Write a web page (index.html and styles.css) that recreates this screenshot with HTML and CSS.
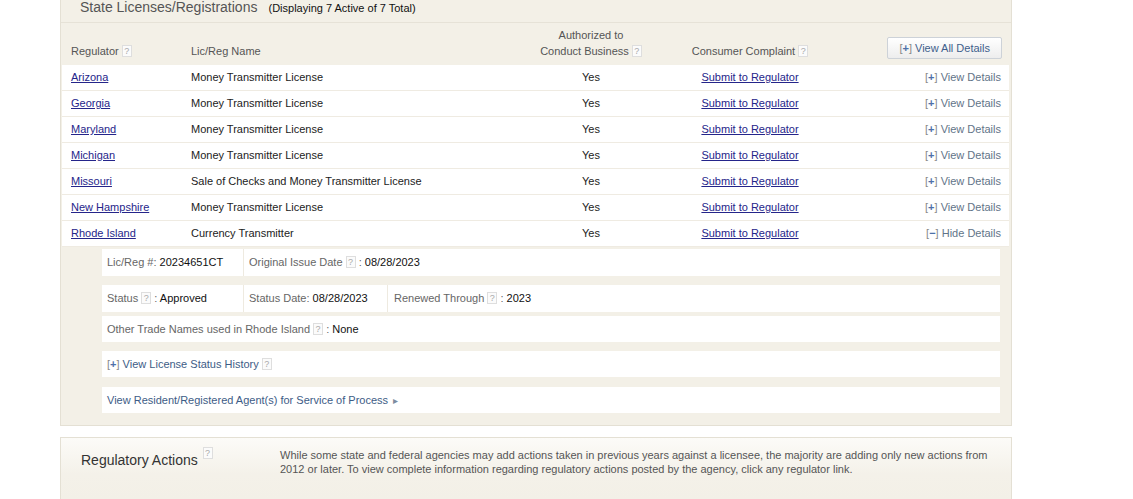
FILE: index.html
```html
<!DOCTYPE html>
<html>
<head>
<meta charset="utf-8">
<link rel="stylesheet" href="styles.css">
</head>
<body>
<div class="panel licenses">
  <div class="panel-title">
    <span class="title">State Licenses/Registrations</span>
    <span class="count">(Displaying 7 Active of 7 Total)</span>
  </div>
  <div class="grid thead">
    <div class="c1">Regulator <span class="help">?</span></div>
    <div class="c2">Lic/Reg Name</div>
    <div class="c3">Authorized to<br>Conduct Business <span class="help">?</span></div>
    <div class="c4">Consumer Complaint <span class="help">?</span></div>
    <div class="c5"><span class="btn"><span class="tog">[<b>+</b>]</span> View All Details</span></div>
  </div>
  <div class="grid row">
    <div class="c1"><a class="link">Arizona</a></div>
    <div class="c2">Money Transmitter License</div>
    <div class="c3">Yes</div>
    <div class="c4"><a class="link">Submit to Regulator</a></div>
    <div class="c5 act"><span class="tog">[<b>+</b>]</span> View Details</div>
  </div>
  <div class="grid row">
    <div class="c1"><a class="link">Georgia</a></div>
    <div class="c2">Money Transmitter License</div>
    <div class="c3">Yes</div>
    <div class="c4"><a class="link">Submit to Regulator</a></div>
    <div class="c5 act"><span class="tog">[<b>+</b>]</span> View Details</div>
  </div>
  <div class="grid row">
    <div class="c1"><a class="link">Maryland</a></div>
    <div class="c2">Money Transmitter License</div>
    <div class="c3">Yes</div>
    <div class="c4"><a class="link">Submit to Regulator</a></div>
    <div class="c5 act"><span class="tog">[<b>+</b>]</span> View Details</div>
  </div>
  <div class="grid row">
    <div class="c1"><a class="link">Michigan</a></div>
    <div class="c2">Money Transmitter License</div>
    <div class="c3">Yes</div>
    <div class="c4"><a class="link">Submit to Regulator</a></div>
    <div class="c5 act"><span class="tog">[<b>+</b>]</span> View Details</div>
  </div>
  <div class="grid row">
    <div class="c1"><a class="link">Missouri</a></div>
    <div class="c2">Sale of Checks and Money Transmitter License</div>
    <div class="c3">Yes</div>
    <div class="c4"><a class="link">Submit to Regulator</a></div>
    <div class="c5 act"><span class="tog">[<b>+</b>]</span> View Details</div>
  </div>
  <div class="grid row">
    <div class="c1"><a class="link">New Hampshire</a></div>
    <div class="c2">Money Transmitter License</div>
    <div class="c3">Yes</div>
    <div class="c4"><a class="link">Submit to Regulator</a></div>
    <div class="c5 act"><span class="tog">[<b>+</b>]</span> View Details</div>
  </div>
  <div class="grid row">
    <div class="c1"><a class="link">Rhode Island</a></div>
    <div class="c2">Currency Transmitter</div>
    <div class="c3">Yes</div>
    <div class="c4"><a class="link">Submit to Regulator</a></div>
    <div class="c5 act"><span class="tog">[<b>&minus;</b>]</span> Hide Details</div>
  </div>

  <div class="details">
    <div class="box b1">
      <div class="cell w1"><span class="lbl">Lic/Reg #:</span> <span class="val">20234651CT</span></div>
      <div class="cell"><span class="lbl">Original Issue Date</span> <span class="help">?</span> <span class="lbl">:</span> <span class="val">08/28/2023</span></div>
    </div>
    <div class="box b2">
      <div class="cell w1"><span class="lbl">Status</span> <span class="help">?</span> <span class="lbl">:</span> <span class="val">Approved</span></div>
      <div class="cell w2"><span class="lbl">Status Date:</span> <span class="val">08/28/2023</span></div>
      <div class="cell c3d"><span class="lbl">Renewed Through</span> <span class="help">?</span> <span class="lbl">:</span> <span class="val">2023</span></div>
    </div>
    <div class="box b3">
      <div class="cell"><span class="lbl">Other Trade Names used in Rhode Island</span> <span class="help">?</span> <span class="lbl">:</span> <span class="val">None</span></div>
    </div>
    <div class="box b4">
      <div class="cell"><span class="blue"><span class="tog">[<b>+</b>]</span> View License Status History</span> <span class="help">?</span></div>
    </div>
    <div class="box b5">
      <div class="cell"><span class="blue">View Resident/Registered Agent(s) for Service of Process</span> <span class="arrow">&#9656;</span></div>
    </div>
  </div>
</div>

<div class="panel actions">
  <div class="act-title">Regulatory Actions <span class="help sup">?</span></div>
  <p class="act-text">While some state and federal agencies may add actions taken in previous years against a licensee, the majority are adding only new actions from 2012 or later. To view complete information regarding regulatory actions posted by the agency, click any regulator link.</p>
</div>
</body>
</html>
```

FILE: styles.css
```css
html, body {
  margin: 0;
  padding: 0;
  background: #ffffff;
  overflow: hidden;
}
body {
  font-family: "Liberation Sans", Arial, sans-serif;
  font-size: 11px;
  color: #222;
}
.panel {
  box-sizing: border-box;
  width: 952px;
  margin-left: 60px;
  background: #f3f0e7;
  border: 1px solid #e4e0d4;
}
.licenses {
  border-top: none;
  padding: 0 2px 12px 1px;
}
.panel-title {
  height: 22px;
  margin: 0 -2px 0 -1px;
  padding-left: 19px;
  border-bottom: 1px solid #e6e2d7;
  white-space: nowrap;
}
.title {
  font-size: 14px;
  line-height: 14px;
  color: #555;
}
.count {
  font-size: 11px;
  color: #111;
  margin-left: 8px;
}
.grid {
  display: grid;
  grid-template-columns: 120px 349px 120px 198px 160px;
}
.thead {
  height: 42px;
  align-items: end;
  color: #555;
  line-height: 16px;
}
.thead > div {
  padding-bottom: 6px;
}
.thead .c5 {
  padding-bottom: 6px;
  line-height: 21px;
}
.c1, .c2 {
  padding-left: 9px;
}
.c3, .c4 {
  text-align: center;
}
.c5 {
  text-align: right;
  padding-right: 8px;
}
.thead .c5 {
  padding-right: 7px;
}
.row {
  background: #fff;
  height: 25px;
  line-height: 25px;
  border-bottom: 1px solid #efebe2;
  white-space: nowrap;
}
.link {
  color: #25258a;
  text-decoration: underline;
}
.act {
  color: #627488;
}
.tog {
  color: #888;
}
.tog b {
  color: #4d70a8;
  font-weight: bold;
}
.btn {
  display: inline-block;
  box-sizing: border-box;
  height: 22px;
  padding: 0 11px 0 11px;
  border: 1px solid #cdd2d8;
  border-radius: 2px;
  background: linear-gradient(#ffffff, #ededed);
  color: #3f5f8c;
  font-size: 11px;
  line-height: 20px;
  vertical-align: bottom;
}
.help {
  display: inline-block;
  box-sizing: border-box;
  width: 10px;
  height: 12px;
  border: 1px solid #dedede;
  background: #fbfbfb;
  color: #aaa;
  font-size: 9px;
  line-height: 10px;
  text-align: center;
  vertical-align: 1px;
}
.details {
  margin: 2px 9px 0 40px;
}
.box {
  display: flex;
  background: #fff;
  height: 26px;
  line-height: 26px;
  white-space: nowrap;
}
.b1 { height: 27px; line-height: 27px; }
.b2 { height: 27px; line-height: 27px; margin-top: 9px; }
.b3 { margin-top: 4px; }
.b4 { margin-top: 9px; }
.b5 { margin-top: 10px; }
.cell {
  padding-left: 5px;
}
.w1 {
  width: 136px;
  border-right: 1px solid #eeeae0;
}
.w2 {
  width: 138px;
  border-right: 1px solid #eeeae0;
}
.c3d {
  padding-left: 6px;
}
.lbl {
  color: #666;
}
.val {
  color: #111;
}
.blue {
  color: #3d5c86;
}
.arrow {
  color: #7c8ca0;
  font-size: 10px;
  margin-left: 2px;
}
.actions {
  margin-top: 11px;
  height: 62px;
  border-bottom: none;
  display: flex;
  background: linear-gradient(#fcfbf8 0%, #f4f1e9 60%, #f3f0e7 100%);
}
.act-title {
  width: 199px;
  padding-left: 20px;
  padding-top: 9px;
  font-size: 14px;
  line-height: 18px;
  color: #333;
  white-space: nowrap;
}
.help.sup {
  vertical-align: 9px;
  margin-left: 1px;
}
.act-text {
  margin: 10px 0 0 0;
  width: 715px;
  font-size: 11px;
  line-height: 14px;
  color: #555;
}
```
